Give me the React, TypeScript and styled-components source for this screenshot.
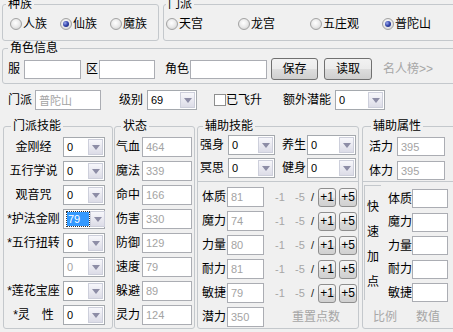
import React from 'react';
import styled, { createGlobalStyle, css } from 'styled-components';

const FONT = `"Liberation Sans", "Noto Sans CJK SC", sans-serif`;

const GlobalStyle = createGlobalStyle`
  * { box-sizing: border-box; }
  html, body { margin: 0; padding: 0; overflow: hidden; background: #f0f0f0; }
  body {
    width: 453px;
    height: 332px;
    font-family: ${FONT};
    font-size: 12px;
    line-height: 16px;
    color: #111;
  }
`;

const Page = styled.div`
  width: 470px;
  margin-top: -3px;
  padding-left: 2px;
  display: flex;
  flex-direction: column;
`;

const Row = styled.div<{ $mt?: number; $pl?: number; $h?: number }>`
  display: flex;
  align-items: ${p => (p.$h ? 'stretch' : 'center')};
  margin-top: ${p => p.$mt ?? 0}px;
  padding-left: ${p => p.$pl ?? 0}px;
  ${p => p.$h && css`height: ${p.$h}px;`}
`;

const Group = styled.fieldset<{ $w?: number; $ml?: number }>`
  margin: 0 0 0 ${p => p.$ml ?? 0}px;
  padding: 0;
  min-width: 0;
  border: 1px solid #c4c8cc;
  border-radius: 3px;
  ${p => (p.$w ? css`width: ${p.$w}px; flex: none;` : css`flex: 1;`)}
`;

const Legend = styled.legend<{ $off: number }>`
  margin-left: ${p => p.$off}px;
  padding: 0 2px;
  line-height: 14px;
  font-size: 12px;
  color: #000;
`;

/* ---------- radios ---------- */
const RadioBody = styled.div<{ $pl: number; $col: number }>`
  height: 29px;
  padding: 5px 0 0 ${p => p.$pl}px;
  display: grid;
  grid-auto-flow: column;
  grid-auto-columns: ${p => p.$col}px;
  justify-content: start;
  align-items: start;
`;

const RadioItem = styled.label`
  display: flex;
  align-items: center;
  height: 16px;
  white-space: nowrap;
  color: #000;
`;

const RadioDot = styled.span<{ $on?: boolean }>`
  flex: none;
  width: 12px;
  height: 12px;
  margin-right: 1px;
  border-radius: 50%;
  border: 1px solid #a2a2a2;
  background: radial-gradient(circle at 45% 40%, #ffffff 0%, #ececec 45%, #c9c9c9 100%);
  display: inline-flex;
  align-items: center;
  justify-content: center;
  ${p =>
    p.$on &&
    css`
      &::after {
        content: '';
        width: 6px;
        height: 6px;
        border-radius: 50%;
        background: radial-gradient(circle at 35% 35%, #9aa8ee 0%, #3243a8 50%, #14206a 100%);
      }
    `}
`;

/* ---------- generic controls ---------- */
const Label = styled.span<{ $w?: number; $ml?: number; $pl?: number; $center?: boolean; $muted?: boolean }>`
  flex: none;
  ${p => p.$w && css`width: ${p.$w}px;`}
  margin-left: ${p => p.$ml ?? 0}px;
  padding-left: ${p => p.$pl ?? 0}px;
  text-align: ${p => (p.$center ? 'center' : 'left')};
  white-space: nowrap;
  color: ${p => (p.$muted ? '#a6a6a6' : '#000')};
`;

const Field = styled.input<{ $w: number; $h?: number; $ml?: number; $muted?: boolean }>`
  flex: none;
  display: block;
  width: ${p => p.$w}px;
  height: ${p => p.$h ?? 20}px;
  margin: 0 0 0 ${p => p.$ml ?? 0}px;
  padding: 0 0 0 3px;
  border: 1px solid #abadb3;
  border-radius: 0;
  background: #fff;
  font-family: ${FONT};
  font-size: 11px;
  color: ${p => (p.$muted ? '#a3a3a3' : '#000')};
  outline: none;
`;

const Combo = styled.div<{ $w: number; $ml?: number }>`
  flex: none;
  width: ${p => p.$w}px;
  height: 20px;
  margin-left: ${p => p.$ml ?? 0}px;
  border: 1px solid #a5a9ae;
  background: #fff;
  display: flex;
  align-items: stretch;
`;

const ComboText = styled.span<{ $muted?: boolean }>`
  flex: 1;
  display: flex;
  align-items: center;
  padding-left: 3px;
  font-size: 11px;
  color: ${p => (p.$muted ? '#a3a3a3' : '#000')};
`;

const Highlight = styled.span`
  width: 22px;
  height: 14px;
  line-height: 14px;
  margin-left: 0px;
  padding-left: 1px;
  background: #3399ff;
  color: #fff;
  outline: 1px dotted #333;
`;

const ComboBtn = styled.span`
  flex: none;
  width: 15px;
  margin: 1px;
  border: 1px solid #cdcfdb;
  background: linear-gradient(#f7f7fb, #dcdce7);
  display: flex;
  align-items: center;
  justify-content: center;
  &::after {
    content: '';
    border-left: 4px solid transparent;
    border-right: 4px solid transparent;
    border-top: 5px solid #8d8da6;
  }
`;

const Button = styled.button<{ $w: number; $h: number; $ml?: number; $small?: boolean }>`
  flex: none;
  width: ${p => p.$w}px;
  height: ${p => p.$h}px;
  margin: 0 0 0 ${p => p.$ml ?? 0}px;
  padding: 0;
  border: 1px solid ${p => (p.$small ? '#8e8e8e' : '#707070')};
  border-radius: 3px;
  background: ${p =>
    p.$small
      ? 'linear-gradient(#f6f6f6 0%, #e9e9e9 50%, #dadada 51%, #d0d0d0 100%)'
      : 'linear-gradient(#f2f2f2 0%, #ebebeb 50%, #dddddd 51%, #cfcfcf 100%)'};
  font-family: ${FONT};
  font-size: 12px;
  line-height: 1;
  color: #000;
`;

const Check = styled.span<{ $ml?: number }>`
  flex: none;
  width: 12px;
  height: 12px;
  margin-left: ${p => p.$ml ?? 0}px;
  border: 1px solid #8e8f8f;
  background: #fff;
`;

/* ---------- info group ---------- */
const InfoBody = styled.div`
  height: 28px;
  padding-left: 5px;
  display: flex;
  align-items: center;
`;

/* ---------- lower groups ---------- */
const Stack = styled.div<{ $pt: number; $pl?: number; $gap: number }>`
  display: flex;
  flex-direction: column;
  gap: ${p => p.$gap}px;
  padding: ${p => p.$pt}px 0 0 ${p => p.$pl ?? 0}px;
`;

const Line = styled.div<{ $h?: number }>`
  display: flex;
  align-items: center;
  height: ${p => p.$h ?? 20}px;
`;

const Divider = styled.div<{ $mt: number }>`
  height: 0;
  margin-top: ${p => p.$mt}px;
  border-top: 1px solid #c4c8cc;
`;

const Step = styled.span<{ $w: number; $ml?: number; $dark?: boolean }>`
  flex: none;
  width: ${p => p.$w}px;
  margin-left: ${p => p.$ml ?? 0}px;
  font-size: 11px;
  color: ${p => (p.$dark ? '#222' : '#a6a6a6')};
`;

const QuickSection = styled.div`
  display: flex;
  padding: 3px 0 0 1px;
`;

const QuickBox = styled.div`
  flex: none;
  width: 17px;
  height: 115px;
  padding: 9px 0 0 2px;
  border-top: 1px solid #c4c8cc;
  border-left: 1px solid #c4c8cc;
`;

const QuickText = styled.div`
  width: 12px;
  line-height: 25px;
  word-break: break-all;
  color: #000;
`;

const RatioRow = styled.div`
  display: flex;
  margin-top: 7px;
  padding-left: 10px;
  color: #a8a8a8;
  font-size: 12px;
`;

const Select = ({ value, w, ml, muted, selected }: { value: string; w: number; ml?: number; muted?: boolean; selected?: boolean }) => (
  <Combo $w={w} $ml={ml}>
    <ComboText $muted={muted}>{selected ? <Highlight>{value}</Highlight> : value}</ComboText>
    <ComboBtn />
  </Combo>
);

const skills = [
  { label: '金刚经', value: '0' },
  { label: '五行学说', value: '0' },
  { label: '观音咒', value: '0' },
  { label: '*护法金刚', value: '79', selected: true },
  { label: '*五行扭转', value: '0' },
  { label: '', value: '0', muted: true },
  { label: '*莲花宝座', value: '0' },
  { label: '*灵　性', value: '0' },
];

const stats = [
  ['气血', '464'],
  ['魔法', '339'],
  ['命中', '166'],
  ['伤害', '330'],
  ['防御', '129'],
  ['速度', '79'],
  ['躲避', '89'],
  ['灵力', '124'],
];

const attrs = [
  ['体质', '81'],
  ['魔力', '74'],
  ['力量', '80'],
  ['耐力', '81'],
  ['敏捷', '79'],
];

const quick = ['体质', '魔力', '力量', '耐力', '敏捷'];

export default function App() {
  return (
    <>
      <GlobalStyle />
      <Page>
        <Row>
          <Group $w={157}>
            <Legend $off={3}>种族</Legend>
            <RadioBody $pl={7} $col={50}>
              <RadioItem><RadioDot />人族</RadioItem>
              <RadioItem><RadioDot $on />仙族</RadioItem>
              <RadioItem><RadioDot />魔族</RadioItem>
            </RadioBody>
          </Group>
          <Group $ml={4}>
            <Legend $off={2}>门派</Legend>
            <RadioBody $pl={2} $col={72}>
              <RadioItem><RadioDot />天宫</RadioItem>
              <RadioItem><RadioDot />龙宫</RadioItem>
              <RadioItem><RadioDot />五庄观</RadioItem>
              <RadioItem><RadioDot $on />普陀山</RadioItem>
            </RadioBody>
          </Group>
        </Row>

        <Row>
          <Group>
            <Legend $off={5}>角色信息</Legend>
            <InfoBody>
              <Label $w={16}>服</Label>
              <Field $w={57} $h={19} defaultValue="" />
              <Label $w={13} $ml={5}>区</Label>
              <Field $w={56} $h={19} defaultValue="" />
              <Label $w={25} $ml={10}>角色</Label>
              <Field $w={77} $h={19} defaultValue="" />
              <Button $w={47} $h={22} $ml={4}>保存</Button>
              <Button $w={48} $h={22} $ml={6}>读取</Button>
              <Label $ml={11} $muted>名人榜&gt;&gt;</Label>
            </InfoBody>
          </Group>
        </Row>

        <Row $mt={6} $pl={6}>
          <Label $w={27}>门派</Label>
          <Field $w={66} $muted defaultValue="普陀山" />
          <Label $w={28} $ml={18}>级别</Label>
          <Select value="69" w={50} />
          <Check $ml={17} />
          <Label>已飞升</Label>
          <Label $w={52} $ml={21}>额外潜能</Label>
          <Select value="0" w={50} />
        </Row>

        <Row $mt={9} $h={210}>
          <Group $w={110} $ml={1}>
            <Legend $off={7}>门派技能</Legend>
            <Stack $pt={4} $gap={4}>
              {skills.map((s, i) => (
                <Line key={i}>
                  <Label $w={59} $center>{s.label}</Label>
                  <Select value={s.value} w={42} muted={s.muted} selected={s.selected} />
                </Line>
              ))}
            </Stack>
          </Group>

          <Group $w={81} $ml={1}>
            <Legend $off={6}>状态</Legend>
            <Stack $pt={4} $pl={1} $gap={4}>
              {stats.map(([l, v]) => (
                <Line key={l}>
                  <Label $w={26}>{l}</Label>
                  <Field $w={50} $muted defaultValue={v} />
                </Line>
              ))}
            </Stack>
          </Group>

          <Group $w={162} $ml={2}>
            <Legend $off={5}>辅助技能</Legend>
            <Stack $pt={2} $pl={2} $gap={3}>
              <Line>
                <Label $w={28}>强身</Label>
                <Select value="0" w={47} />
                <Label $w={25} $ml={7}>养生</Label>
                <Select value="0" w={49} />
              </Line>
              <Line>
                <Label $w={28}>冥思</Label>
                <Select value="0" w={47} />
                <Label $w={25} $ml={7}>健身</Label>
                <Select value="0" w={49} />
              </Line>
            </Stack>
            <Divider $mt={3} />
            <Stack $pt={5} $pl={2} $gap={4}>
              {attrs.map(([l, v]) => (
                <Line key={l}>
                  <Label $w={27} $pl={2}>{l}</Label>
                  <Field $w={37} $muted defaultValue={v} />
                  <Step $w={20} $ml={11}>-1</Step>
                  <Step $w={16}>-5</Step>
                  <Step $w={7} $dark>/</Step>
                  <Button $w={18} $h={19} $small>+1</Button>
                  <Button $w={18} $h={19} $ml={3} $small>+5</Button>
                </Line>
              ))}
              <Line>
                <Label $w={27} $pl={2}>潜力</Label>
                <Field $w={37} $muted defaultValue="350" />
                <Label $ml={28} $muted>重置点数</Label>
              </Line>
            </Stack>
          </Group>

          <Group $ml={3}>
            <Legend $off={8}>辅助属性</Legend>
            <Stack $pt={4} $pl={6} $gap={5}>
              <Line $h={19}>
                <Label $w={28}>活力</Label>
                <Field $w={48} $h={19} $muted defaultValue="395" />
              </Line>
              <Line $h={19}>
                <Label $w={28}>体力</Label>
                <Field $w={48} $h={19} $muted defaultValue="395" />
              </Line>
            </Stack>
            <Divider $mt={1} />
            <QuickSection>
              <QuickBox>
                <QuickText>快速加点</QuickText>
              </QuickBox>
              <Stack $pt={4} $pl={7} $gap={4.5}>
                {quick.map(l => (
                  <Line key={l} $h={19}>
                    <Label $w={24}>{l}</Label>
                    <Field $w={36} $h={19} defaultValue="" />
                  </Line>
                ))}
              </Stack>
            </QuickSection>
            <RatioRow>
              <span>比例</span>
              <Label $ml={19} $muted>数值</Label>
            </RatioRow>
          </Group>
        </Row>
      </Page>
    </>
  );
}
